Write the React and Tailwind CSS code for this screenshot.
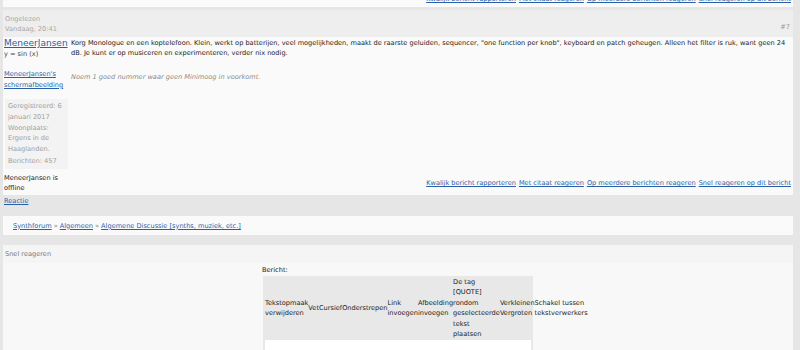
import React from "react";

const L = ({ children, className = "" }) => (
  <a href="#" className={"text-[#2b5fa8] underline " + className}>{children}</a>
);

const FooterLinks = () => (
  <div className="flex justify-end gap-[3px]">
    <L>Kwalijk bericht rapporteren</L>
    <L>Met citaat reageren</L>
    <L>Op meerdere berichten reageren</L>
    <L>Snel reageren op dit bericht</L>
  </div>
);

export default function App() {
  return (
    <div className="w-[800px] h-[350px] overflow-hidden bg-[#e6e6e6] font-['DejaVu_Sans',sans-serif] text-[6.6px] leading-[10.4px] text-[#222]">
      <div className="pl-[3px] pr-[7px]">
        {/* previous post footer */}
        <div className="h-[7px] overflow-hidden bg-[#fafafa] pr-[2px]">
          <div className="-mt-[6px]">
            <FooterLinks />
          </div>
        </div>
        <div className="h-[3px]" />
        {/* post header */}
        <div className="bg-[#eeeeee] h-[27px] flex justify-between items-start pl-[2px] pr-[3px] pt-[4px] text-[#a8a8a8]">
          <div>
            <div>Ongelezen</div>
            <div>Vandaag, 20:41</div>
          </div>
          <div className="mt-[8px]">
            <a href="#" className="text-[#9a9a9a]">#7</a>
          </div>
        </div>
        {/* post body */}
        <div className="bg-[#fafafa] flex">
          <div className="w-[66px] shrink-0 pl-[1px] pt-[1px] pb-[2px]">
            <a href="#" className="block text-[9px] leading-[11px] text-[#2b5fa8] underline">MeneerJansen</a>
            <div className="text-[#444]">y = sin (x)</div>
            <div className="mt-[10px]">
              <L className="block">MeneerJansen's schermafbeelding</L>
            </div>
            <div className="mt-[9px] ml-[1px] mr-[1px] bg-[#f3f3f3] px-[3px] py-[2px] text-[#a0a0a0]">
              <div>Geregistreerd: 6 januari 2017</div>
              <div className="mt-[1px]">Woonplaats: Ergens in de Haaglanden.</div>
              <div className="mt-[2px]">Berichten: 457</div>
            </div>
            <div className="mt-[4px] text-[#222]">MeneerJansen is offline</div>
          </div>
          <div className="flex-1 flex flex-col justify-between pl-[2px] pr-[2px] pt-[1px] pb-[7px]">
            <div>
              <div>
                Korg Monologue en een koptelefoon. Klein, werkt op batterijen, veel mogelijkheden, maakt de raarste geluiden, sequencer, "one function per knob", keyboard en patch geheugen. Alleen het filter is ruk, want geen 24 dB. Je kunt er op musiceren en experimenteren, verder nix nodig.
              </div>
              <div className="mt-[13px] italic text-[#8a8a8a]">Noem 1 goed nummer waar geen Minimoog in voorkomt.</div>
            </div>
            <FooterLinks />
          </div>
        </div>
        {/* Reactie */}
        <div className="h-[21px] pl-[1px] pt-[1px]">
          <L>Reactie</L>
        </div>
        {/* breadcrumb */}
        <div className="bg-[#fafafa] h-[19px] flex items-center pl-[10px]">
          <L>Synthforum</L>
          <span className="text-[#888] mx-[2px]">»</span>
          <L>Algemeen</L>
          <span className="text-[#888] mx-[2px]">»</span>
          <L>Algemene Discussie [synths, muziek, etc.]</L>
        </div>
        <div className="h-[10px]" />
        {/* snel reageren */}
        <div className="bg-[#f5f5f5] h-[120px]">
          <div className="h-[18px] flex items-center pl-[2px] text-[#777]">Snel reageren</div>
          <div className="bg-[#f8f8f8] pt-[2px]">
            <div className="w-[272px] mx-auto">
              <div>Bericht:</div>
              <div className="w-[270px] ml-[1px] bg-[#e8e8e8] px-[2px] pt-[1px]">
                <table className="border-collapse">
                  <tbody>
                    <tr>
                      <td className="p-0 align-middle">Tekstopmaak verwijderen</td>
                      <td className="p-0 align-middle">Vet</td>
                      <td className="p-0 align-middle">Cursief</td>
                      <td className="p-0 align-middle">Onderstrepen</td>
                      <td className="p-0 align-middle">Link invoegen</td>
                      <td className="p-0 align-middle">Afbeelding invoegen</td>
                      <td className="p-0 align-middle">De tag [QUOTE] rondom geselecteerde tekst plaatsen</td>
                      <td className="p-0 align-middle">Verkleinen Vergroten</td>
                      <td className="p-0 align-middle">Schakel tussen tekstverwerkers</td>
                    </tr>
                  </tbody>
                </table>
                <div className="bg-white h-[30px] mt-[1px]" />
              </div>
            </div>
          </div>
        </div>
      </div>
    </div>
  );
}
